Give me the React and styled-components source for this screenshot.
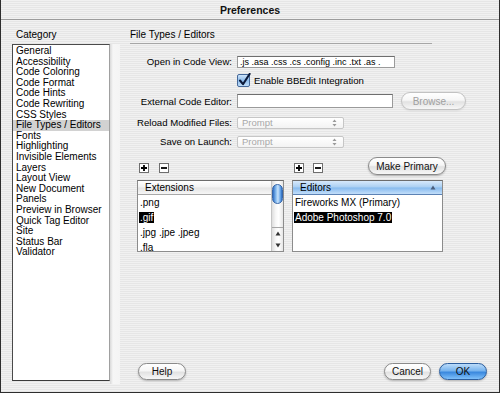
import React from "react";
import styled, { createGlobalStyle } from "styled-components";

const Global = createGlobalStyle`
  html, body { margin: 0; padding: 0; background: #ffffff; }
  body { font-family: "Liberation Sans", Arial, sans-serif; font-size: 10px; color: #000; }
  * { box-sizing: border-box; }
`;

const stripes = `repeating-linear-gradient(to bottom, #f1f1f1 0px, #f1f1f1 1px, #e6e6e6 1px, #e6e6e6 2px)`;

const Window = styled.div`
  width: 500px;
  height: 393px;
  border: 1px solid #2e2e2e;
  border-top: none;
  background: ${stripes};
  display: flex;
  flex-direction: column;
  overflow: hidden;
`;

const TitleBar = styled.div`
  height: 20px;
  flex: none;
  border-bottom: 1px solid #9c9c9c;
  display: flex;
  align-items: center;
  justify-content: center;
  font-size: 10.5px;
  font-weight: bold;
  color: #111;
  padding-top: 1px;
`;

const Body = styled.div`
  flex: 1;
  display: flex;
  min-height: 0;
`;

const LeftCol = styled.div`
  width: 109px;
  flex: none;
  padding: 8px 0 0 11px;
  display: flex;
  flex-direction: column;
`;

const SectionLabel = styled.div`
  height: 14px;
  line-height: 14px;
  margin-bottom: 2px;
  padding-left: ${(p) => p.$indent || 0}px;
`;

const CategoryList = styled.ul`
  list-style: none;
  margin: 0;
  padding: 1px 0 0 0;
  width: 98px;
  height: 337px;
  background: #fff;
  border-top: 1px solid #4a4a4a;
  border-left: 1px solid #4a4a4a;
  border-bottom: 1px solid #3a3a3a;
  border-right: 1px solid #a0a0a0;
`;

const CategoryItem = styled.li`
  height: 10.6px;
  line-height: 10.6px;
  padding-left: 3px;
  white-space: nowrap;
  background: ${(p) => (p.$selected ? "#d2d2d2" : "transparent")};
`;

const Splitter = styled.div`
  width: 10px;
  flex: none;
  margin: 24px 0 8px 0;
  background: linear-gradient(to right, #d9d9d9 0px, #f6f6f6 3px, #f4f4f4 100%);
`;

const RightPanel = styled.div`
  flex: 1;
  display: flex;
  flex-direction: column;
  padding: 8px 12px 12px 10px;
`;

const PanelHeader = styled.div`
  width: 302px;
  height: 16px;
  line-height: 14px;
  border-bottom: 1px solid #a6a6a6;
`;

const Form = styled.div`
  margin-top: 9px;
  display: flex;
  flex-direction: column;
`;

const Row = styled.div`
  height: ${(p) => p.$h}px;
  display: flex;
  align-items: center;
`;

const FieldLabel = styled.div`
  width: 102px;
  flex: none;
  text-align: right;
  white-space: nowrap;
  margin-right: 5px;
  font-size: 9.6px;
`;

const TextField = styled.div`
  width: ${(p) => p.$w}px;
  height: ${(p) => p.$h}px;
  background: #fff;
  border: 1px solid #9a9a9a;
  border-top-color: #6e6e6e;
  font-size: 9px;
  line-height: ${(p) => p.$h - 2}px;
  padding: 0 2px;
  white-space: nowrap;
  overflow: hidden;
`;

const CheckLabel = styled.label`
  display: flex;
  align-items: center;
  gap: 3px;
  margin-top: 1px;
  font-size: 9.6px;
`;

const PillButton = styled.button`
  width: ${(p) => p.$w}px;
  height: ${(p) => p.$h || 17}px;
  margin-left: ${(p) => p.$ml || 0}px;
  margin-right: ${(p) => p.$mr || 0}px;
  border-radius: 9px;
  border: 1px solid ${(p) => (p.$primary ? "#2c5e9e" : p.$disabled ? "#c2c2c2" : "#8a8a8a")};
  background: ${(p) =>
    p.$primary
      ? "linear-gradient(to bottom, #bcdcfa 0%, #78b4ee 45%, #3a88de 55%, #7fc0fa 100%)"
      : "linear-gradient(to bottom, #ffffff 0%, #f6f6f6 45%, #e2e2e2 55%, #f7f7f7 100%)"};
  box-shadow: 0 1px 2px rgba(0, 0, 0, ${(p) => (p.$disabled ? 0.08 : 0.25)});
  font-family: "Liberation Sans", Arial, sans-serif;
  font-size: 10px;
  font-weight: ${(p) => (p.$bold ? "bold" : "normal")};
  color: ${(p) => (p.$disabled ? "#a0a0a0" : "#111")};
  padding: 0;
  flex: none;
  cursor: default;
`;

const Popup = styled.div`
  width: 107px;
  height: 12px;
  border: 1px solid #c6c6c6;
  border-radius: 2px;
  background: linear-gradient(to bottom, #ffffff, #f3f3f3);
  display: flex;
  align-items: center;
  justify-content: space-between;
  padding: 0 6px 0 4px;
  color: #a8a8a8;
  font-size: 9.5px;
`;

const ListsArea = styled.div`
  margin-top: 5px;
  margin-left: 7px;
  display: flex;
  gap: 8px;
`;

const ListColumn = styled.div`
  width: ${(p) => p.$w}px;
  display: flex;
  flex-direction: column;
`;

const Toolbar = styled.div`
  height: 20px;
  display: flex;
  align-items: center;
  padding-left: 2px;
  gap: ${(p) => p.$gap}px;
`;

const SquareButton = styled.button`
  width: 10px;
  height: 10px;
  padding: 0;
  border: none;
  background: none;
  display: block;
  flex: none;
`;

const ListBox = styled.div`
  margin-top: 4px;
  height: 72px;
  background: #fff;
  border: 1px solid #8c8c8c;
  border-top-color: #6c6c6c;
  display: flex;
  overflow: hidden;
`;

const ListContent = styled.div`
  flex: 1;
  min-width: 0;
  display: flex;
  flex-direction: column;
`;

const ColumnHeader = styled.div`
  height: 14px;
  flex: none;
  display: flex;
  align-items: center;
  justify-content: space-between;
  padding: 0 6px 0 ${(p) => p.$pl}px;
  border-bottom: 1px solid ${(p) => (p.$active ? "#5c82b4" : "#a8a8a8")};
  background: ${(p) =>
    p.$active
      ? "linear-gradient(to bottom, #d7e9fb 0%, #a9cff3 48%, #86baee 52%, #c2defa 100%)"
      : "linear-gradient(to bottom, #ffffff 0%, #f2f2f2 48%, #e4e4e4 52%, #f6f6f6 100%)"};
`;

const ListRow = styled.div`
  height: 15px;
  flex: none;
  display: flex;
  align-items: center;
  padding-left: 1px;
  white-space: nowrap;
`;

const ItemText = styled.span`
  padding: 0 1px;
  line-height: 11px;
  background: ${(p) => (p.$selected ? "#000" : "transparent")};
  color: ${(p) => (p.$selected ? "#fff" : "#000")};
`;

const ScrollBar = styled.div`
  width: 12px;
  flex: none;
  border-left: 1px solid #c4c4c4;
  background: linear-gradient(to right, #dedede 0%, #f7f7f7 35%, #ffffff 60%, #e6e6e6 100%);
  display: flex;
  flex-direction: column;
`;

const Thumb = styled.div`
  margin: 3px 0 0 0;
  height: 20px;
  border-radius: 6px;
  border: 1px solid #3766a8;
  background: linear-gradient(to right, #2f6ec4 0%, #8cc0f2 35%, #c9e3fb 55%, #5a9be4 85%, #2c68ba 100%);
`;

const ArrowCell = styled.div`
  height: 12px;
  display: flex;
  align-items: center;
  justify-content: center;
  border-top: ${(p) => (p.$first ? "1px solid #a6a6a6" : "none")};
  margin-top: ${(p) => (p.$first ? "auto" : "0")};
`;

const Spacer = styled.div`
  flex: 1;
`;

const ButtonBar = styled.div`
  display: flex;
  align-items: center;
  height: 17px;
`;

const categories = [
  "General",
  "Accessibility",
  "Code Coloring",
  "Code Format",
  "Code Hints",
  "Code Rewriting",
  "CSS Styles",
  "File Types / Editors",
  "Fonts",
  "Highlighting",
  "Invisible Elements",
  "Layers",
  "Layout View",
  "New Document",
  "Panels",
  "Preview in Browser",
  "Quick Tag Editor",
  "Site",
  "Status Bar",
  "Validator",
];

const PlusIcon = () => (
  <svg width="10" height="10" viewBox="0 0 10 10">
    <rect x="0.5" y="0.5" width="9" height="9" fill="#fff" stroke="#6e6e6e" />
    <path d="M2 5h6M5 2v6" stroke="#000" strokeWidth="1.8" />
  </svg>
);

const MinusIcon = () => (
  <svg width="10" height="10" viewBox="0 0 10 10">
    <rect x="0.5" y="0.5" width="9" height="9" fill="#fff" stroke="#6e6e6e" />
    <path d="M2 5h6" stroke="#000" strokeWidth="1.8" />
  </svg>
);

const CheckIcon = () => (
  <svg width="14" height="14" viewBox="0 0 14 14">
    <defs>
      <linearGradient id="cbg" x1="0" y1="0" x2="0" y2="1">
        <stop offset="0" stopColor="#d4e8fb" />
        <stop offset="0.5" stopColor="#8fbdec" />
        <stop offset="1" stopColor="#c3e0fb" />
      </linearGradient>
    </defs>
    <rect x="0.5" y="1.5" width="12" height="12" rx="1.5" fill="url(#cbg)" stroke="#46699a" />
    <path d="M3 7.5 L6 11.2 L12.6 1" fill="none" stroke="#0c1a3a" strokeWidth="2.1" strokeLinecap="round" strokeLinejoin="round" />
  </svg>
);

const PopupArrows = () => (
  <svg width="5" height="8" viewBox="0 0 5 8">
    <path d="M2.5 0.5 L4.5 3 H0.5Z M2.5 7.5 L4.5 5 H0.5Z" fill="#9a9a9a" />
  </svg>
);

const UpArrow = ({ color = "#333" }) => (
  <svg width="6" height="5" viewBox="0 0 6 5">
    <path d="M3 0.5 L5.5 4.5 H0.5Z" fill={color} />
  </svg>
);

const DownArrow = () => (
  <svg width="6" height="5" viewBox="0 0 6 5">
    <path d="M3 4.5 L5.5 0.5 H0.5Z" fill="#333" />
  </svg>
);

export default function App() {
  return (
    <>
      <Global />
      <Window>
        <TitleBar>Preferences</TitleBar>
        <Body>
          <LeftCol>
            <SectionLabel $indent={4}>Category</SectionLabel>
            <CategoryList>
              {categories.map((c) => (
                <CategoryItem key={c} $selected={c === "File Types / Editors"}>
                  {c}
                </CategoryItem>
              ))}
            </CategoryList>
          </LeftCol>
          <Splitter />
          <RightPanel>
            <PanelHeader>File Types / Editors</PanelHeader>
            <Form>
              <Row $h={17}>
                <FieldLabel>Open in Code View:</FieldLabel>
                <TextField $w={158} $h={12}>.js .asa .css .cs .config .inc .txt .as .</TextField>
              </Row>
              <Row $h={19}>
                <FieldLabel />
                <CheckLabel>
                  <CheckIcon />
                  Enable BBEdit Integration
                </CheckLabel>
              </Row>
              <Row $h={24}>
                <FieldLabel>External Code Editor:</FieldLabel>
                <TextField $w={156} $h={14} />
                <PillButton $w={65} $h={18} $ml={8} $disabled>
                  Browse...
                </PillButton>
              </Row>
              <Row $h={19}>
                <FieldLabel>Reload Modified Files:</FieldLabel>
                <Popup>
                  Prompt
                  <PopupArrows />
                </Popup>
              </Row>
              <Row $h={19}>
                <FieldLabel>Save on Launch:</FieldLabel>
                <Popup>
                  Prompt
                  <PopupArrows />
                </Popup>
              </Row>
            </Form>
            <ListsArea>
              <ListColumn $w={147}>
                <Toolbar $gap={10}>
                  <SquareButton aria-label="Add extension"><PlusIcon /></SquareButton>
                  <SquareButton aria-label="Remove extension"><MinusIcon /></SquareButton>
                </Toolbar>
                <ListBox>
                  <ListContent>
                    <ColumnHeader $pl={7}>Extensions</ColumnHeader>
                    <ListRow><ItemText>.png</ItemText></ListRow>
                    <ListRow><ItemText $selected>.gif</ItemText></ListRow>
                    <ListRow><ItemText>.jpg .jpe .jpeg</ItemText></ListRow>
                    <ListRow><ItemText>.fla</ItemText></ListRow>
                  </ListContent>
                  <ScrollBar>
                    <Thumb />
                    <ArrowCell $first><UpArrow /></ArrowCell>
                    <ArrowCell><DownArrow /></ArrowCell>
                  </ScrollBar>
                </ListBox>
              </ListColumn>
              <ListColumn $w={151}>
                <Toolbar $gap={9}>
                  <SquareButton aria-label="Add editor"><PlusIcon /></SquareButton>
                  <SquareButton aria-label="Remove editor"><MinusIcon /></SquareButton>
                  <PillButton $w={78} $h={18} $ml={36} $mr={-2}>
                    Make Primary
                  </PillButton>
                </Toolbar>
                <ListBox>
                  <ListContent>
                    <ColumnHeader $pl={7} $active>
                      Editors
                      <UpArrow color="#4a5f7e" />
                    </ColumnHeader>
                    <ListRow><ItemText>Fireworks MX (Primary)</ItemText></ListRow>
                    <ListRow><ItemText $selected>Adobe Photoshop 7.0</ItemText></ListRow>
                  </ListContent>
                </ListBox>
              </ListColumn>
            </ListsArea>
            <Spacer />
            <ButtonBar>
              <PillButton $w={48} $ml={8}>Help</PillButton>
              <Spacer />
              <PillButton $w={47}>Cancel</PillButton>
              <PillButton $w={48} $ml={8} $primary>OK</PillButton>
            </ButtonBar>
          </RightPanel>
        </Body>
      </Window>
    </>
  );
}
